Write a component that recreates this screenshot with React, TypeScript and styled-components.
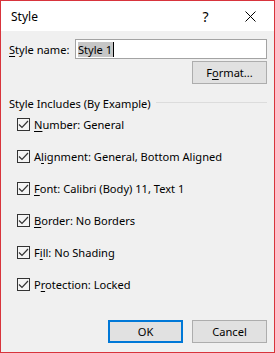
import React from "react";
import styled, { createGlobalStyle } from "styled-components";

const Global = createGlobalStyle`
  html, body { margin: 0; padding: 0; background: #ffffff; }
  * { box-sizing: border-box; }
  body { font-family: "Noto Sans", "Segoe UI", Arial, sans-serif; font-size: 11.1px; color: #000; }
`;

const Window = styled.div`
  width: 275px;
  height: 353px;
  border: 1px solid #d8343c;
  background: #f0f0f0;
  display: flex;
  flex-direction: column;
`;

const TitleBar = styled.div`
  height: 30px;
  background: #ffffff;
  display: flex;
  align-items: center;
  padding-left: 10px;
`;

const Title = styled.div`
  flex: 1;
  font-size: 12px;
`;

const TitleButton = styled.div<{ $w: number }>`
  width: ${(p) => p.$w}px;
  height: 30px;
  display: flex;
  align-items: center;
  justify-content: center;
  font-size: 14px;
`;

const Body = styled.div`
  flex: 1;
  display: flex;
  flex-direction: column;
  padding: 8px 7px 9px 8px;
`;

const NameRow = styled.div`
  display: flex;
  align-items: center;
  height: 20px;
`;

const Label = styled.label`
  width: 66px;
  flex-shrink: 0;
  white-space: nowrap;
`;

const Input = styled.div`
  flex: 1;
  height: 20px;
  border: 1px solid #a3a3a3;
  background: #ffffff;
  display: flex;
  align-items: center;
  padding-left: 2px;
`;

const Selected = styled.span`
  background: #c6c6c6;
  line-height: 15px;
  padding-right: 1px;
`;

const Caret = styled.span`
  width: 1px;
  height: 15px;
  background: #000;
`;

const RightRow = styled.div<{ $top: number }>`
  display: flex;
  justify-content: flex-end;
  gap: 9px;
  margin-top: ${(p) => p.$top}px;
`;

const Button = styled.div<{ $default?: boolean }>`
  width: 75px;
  height: 23px;
  background: #e1e1e1;
  border: ${(p) => (p.$default ? "2px solid #0078d7" : "1px solid #adadad")};
  display: flex;
  align-items: center;
  justify-content: center;
`;

const GroupHeading = styled.div`
  display: flex;
  align-items: center;
  height: 14px;
  margin-top: 12px;
  gap: 5px;
`;

const Rule = styled.div`
  flex: 1;
  height: 1px;
  background: #dcdcdc;
  margin-top: -2px;
`;

const CheckList = styled.div`
  display: flex;
  flex-direction: column;
  gap: 12px;
  margin-top: 4px;
  padding-left: 8px;
`;

const CheckRow = styled.div`
  display: flex;
  align-items: center;
  height: 20px;
  gap: 4px;
`;

const Box = styled.div`
  width: 13px;
  height: 13px;
  border: 1px solid #333333;
  background: #f4f4f4;
  display: flex;
  align-items: center;
  justify-content: center;
`;

const Spacer = styled.div`
  flex: 1;
`;

const U = styled.span`
  text-decoration: underline;
  text-underline-offset: 2px;
`;

const Check = () => (
  <Box>
    <svg width="11" height="11" viewBox="0 0 11 11">
      <path d="M1 5.5 L4 8.5 L10 2" fill="none" stroke="#333" strokeWidth="1.2" />
    </svg>
  </Box>
);

const items: [string, string, string][] = [
  ["", "N", "umber: General"],
  ["A", "l", "ignment: General, Bottom Aligned"],
  ["", "F", "ont: Calibri (Body) 11, Text 1"],
  ["", "B", "order: No Borders"],
  ["F", "i", "ll: No Shading"],
  ["P", "r", "otection: Locked"],
];

export default function App() {
  return (
    <>
      <Global />
      <Window>
        <TitleBar>
          <Title>Style</Title>
          <TitleButton $w={41}>?</TitleButton>
          <TitleButton $w={48}>
            <svg width="11" height="11" viewBox="0 0 11 11">
              <path d="M0.5 0.5 L10.5 10.5 M10.5 0.5 L0.5 10.5" stroke="#000" strokeWidth="1" />
            </svg>
          </TitleButton>
        </TitleBar>
        <Body>
          <NameRow>
            <Label>
              <U>S</U>tyle name:
            </Label>
            <Input>
              <Selected>Style 1</Selected>
              <Caret />
            </Input>
          </NameRow>
          <RightRow $top={2}>
            <Button>
              F<U>o</U>rmat...
            </Button>
          </RightRow>
          <GroupHeading>
            <span>Style Includes (By Example)</span>
            <Rule />
          </GroupHeading>
          <CheckList>
            {items.map(([a, u, b]) => (
              <CheckRow key={a + u + b}>
                <Check />
                <span>
                  {a}
                  <U>{u}</U>
                  {b}
                </span>
              </CheckRow>
            ))}
          </CheckList>
          <Spacer />
          <RightRow $top={0}>
            <Button $default>OK</Button>
            <Button>Cancel</Button>
          </RightRow>
        </Body>
      </Window>
    </>
  );
}
